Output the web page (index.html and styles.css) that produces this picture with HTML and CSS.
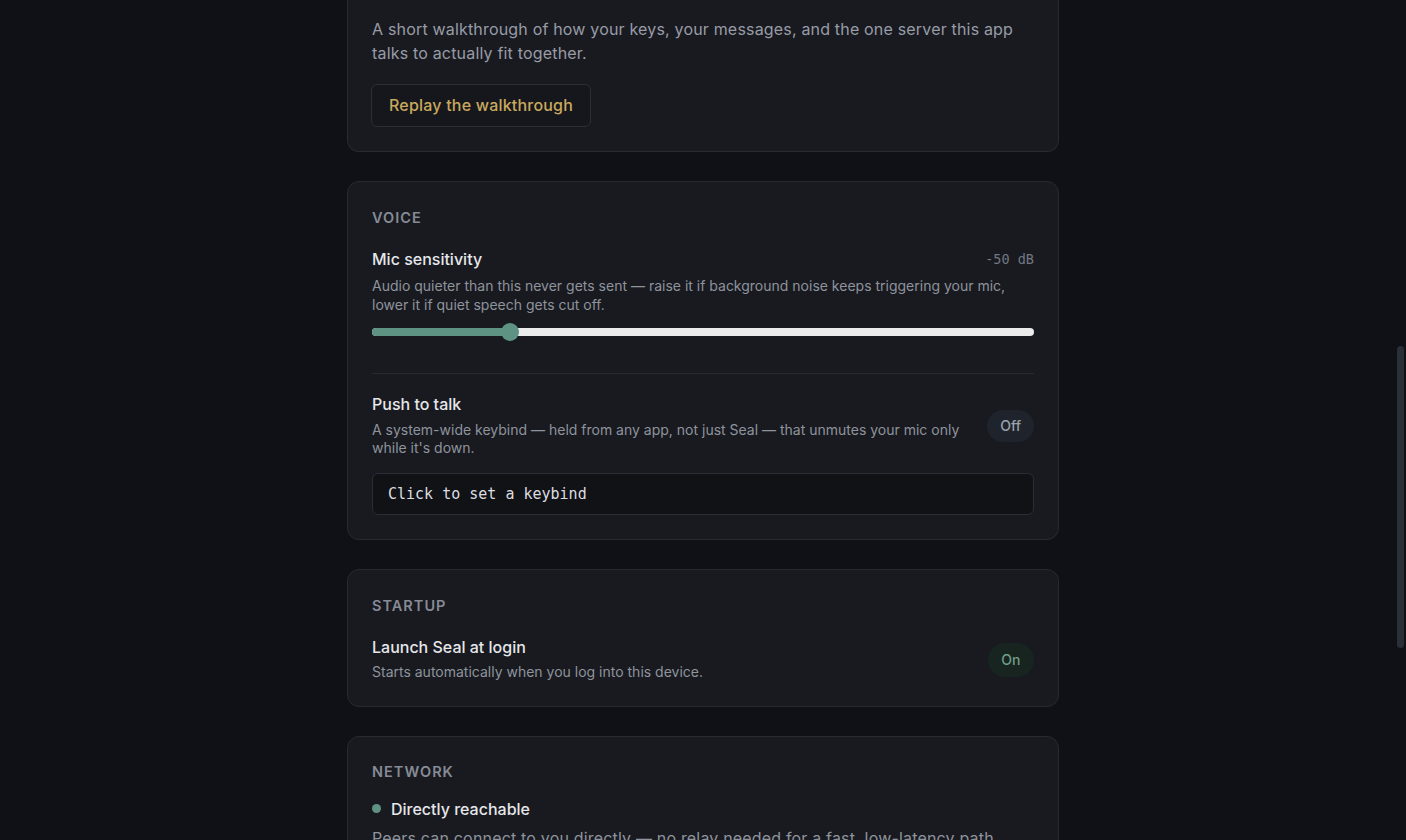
FILE: index.html
```html
<!DOCTYPE html>
<html lang="en">
<head>
<meta charset="utf-8">
<title>Settings</title>
<link rel="stylesheet" href="styles.css">
</head>
<body>
<div class="page">
  <main class="column">
    <section class="card card-cut">
      <p class="lead">A short walkthrough of how your keys, your messages, and the one server this app talks to actually fit together.</p>
      <button class="btn-ghost" type="button">Replay the walkthrough</button>
    </section>

    <section class="card">
      <h2 class="card-title">Voice</h2>
      <div class="setting">
        <div class="setting-head">
          <span class="setting-name">Mic sensitivity</span>
          <span class="setting-value">-50 dB</span>
        </div>
        <p class="setting-desc">Audio quieter than this never gets sent — raise it if background noise keeps triggering your mic, lower it if quiet speech gets cut off.</p>
        <div class="slider">
          <div class="slider-track">
            <div class="slider-fill" style="width: 20.85%"></div>
          </div>
          <div class="slider-thumb" style="left: calc(20.85% - 9px)"></div>
        </div>
      </div>
      <div class="setting setting-sep">
        <div class="setting-row">
          <div class="setting-text">
            <span class="setting-name">Push to talk</span>
            <p class="setting-desc">A system-wide keybind — held from any app, not just Seal — that unmutes your mic only while it's down.</p>
          </div>
          <button class="pill pill-off" type="button">Off</button>
        </div>
        <button class="keybind" type="button">Click to set a keybind</button>
      </div>
    </section>

    <section class="card">
      <h2 class="card-title">Startup</h2>
      <div class="setting">
        <div class="setting-row">
          <div class="setting-text setting-text-compact">
            <span class="setting-name">Launch Seal at login</span>
            <p class="setting-desc">Starts automatically when you log into this device.</p>
          </div>
          <button class="pill pill-on" type="button">On</button>
        </div>
      </div>
    </section>

    <section class="card">
      <h2 class="card-title card-title-tight">Network</h2>
      <div class="status">
        <span class="status-dot"></span>
        <span class="setting-name">Directly reachable</span>
      </div>
      <p class="status-desc">Peers can connect to you directly — no relay needed for a fast, low-latency path.</p>
    </section>
  </main>
  <div class="scrollbar"><div class="scrollbar-thumb"></div></div>
</div>
</body>
</html>
```

FILE: styles.css
```css
* { box-sizing: border-box; }

html, body {
  margin: 0;
  padding: 0;
  height: 100%;
}

body {
  background: #0f1116;
  color: #e4e5e8;
  font-family: Inter, "Noto Sans", "Liberation Sans", sans-serif;
  overflow: hidden;
}

.page {
  position: relative;
  height: 840px;
  overflow: hidden;
}

.column {
  width: 712px;
  margin: 0 auto;
  display: flex;
  flex-direction: column;
  gap: 29px;
}

.card {
  background: #181a20;
  border: 1px solid #272a32;
  border-radius: 12px;
  padding: 24px;
}

.card-cut {
  border-top: none;
  border-radius: 0 0 12px 12px;
  padding-top: 17px;
}

.lead {
  margin: 0 0 19px;
  font-size: 16px;
  line-height: 24px;
  letter-spacing: 0.18px;
  color: #989ca6;
}

.btn-ghost {
  margin-left: -1px;
  font-family: inherit;
  font-size: 16px;
  font-weight: 500;
  line-height: 21px;
  letter-spacing: 0.2px;
  color: #c9a95e;
  background: #15171c;
  border: 1px solid #2b2f37;
  border-radius: 6px;
  padding: 10px 17px;
  cursor: pointer;
}

.card-title {
  margin: 2px 0 21px;
  font-size: 14.5px;
  line-height: 20px;
  font-weight: 600;
  letter-spacing: 0.07em;
  text-transform: uppercase;
  color: #868b95;
}

.card-title-tight { margin: 1px 0 17px; }

.setting-head {
  display: flex;
  justify-content: space-between;
  align-items: center;
}

.setting-name {
  font-size: 16px;
  line-height: 20px;
  font-weight: 500;
  color: #e6e7ea;
}

.setting-value {
  font-family: "DejaVu Sans Mono", "Liberation Mono", monospace;
  font-size: 13.5px;
  color: #727781;
}

.setting-desc {
  margin: 8px 0 0;
  font-size: 14px;
  line-height: 18.8px;
  color: #8f939c;
}

.slider {
  position: relative;
  height: 20px;
  margin-top: 7px;
  display: flex;
  align-items: center;
}

.slider-track {
  width: 100%;
  height: 8px;
  border-radius: 4px;
  background: #ebebeb;
  overflow: hidden;
}

.slider-fill {
  height: 100%;
  background: #5e9384;
}

.slider-thumb {
  position: absolute;
  top: 1px;
  width: 18px;
  height: 18px;
  border-radius: 50%;
  background: #5e9384;
}

.setting-sep {
  margin-top: 31px;
  padding-top: 20px;
  border-top: 1px solid #272a32;
}

.setting-row {
  display: flex;
  align-items: center;
  justify-content: space-between;
  gap: 24px;
}

.setting-text {
  display: flex;
  flex-direction: column;
  flex: 1;
}

.setting-text .setting-desc { margin-top: 7px; }

.setting-text-compact .setting-desc { margin-top: 6px; }

.pill {
  flex: none;
  font-family: inherit;
  font-size: 14px;
  font-weight: 500;
  height: 32px;
  padding: 0 13px;
  border: none;
  border-radius: 16px;
  cursor: pointer;
}

.pill-off {
  background: #1f242c;
  color: #9ba1ab;
}

.pill-on {
  height: 34px;
  padding: 0 13.5px;
  border-radius: 17px;
  background: #18241f;
  color: #6f9d88;
}

.keybind {
  display: block;
  width: 100%;
  margin-top: 15px;
  height: 42px;
  padding: 0 15px;
  text-align: left;
  font-family: "DejaVu Sans Mono", "Liberation Mono", monospace;
  font-size: 15px;
  color: #dcdde0;
  background: #111216;
  border: 1px solid #292d35;
  border-radius: 6px;
  cursor: pointer;
}

.status {
  display: flex;
  align-items: center;
  gap: 10px;
}

.status-dot {
  width: 9px;
  height: 9px;
  border-radius: 50%;
  background: #5e9384;
}

.status-desc {
  margin: 7px 0 0;
  font-size: 16px;
  line-height: 24px;
  letter-spacing: 0.18px;
  color: #8f939c;
}

.scrollbar {
  position: absolute;
  top: 0;
  right: 0;
  width: 12px;
  height: 840px;
}

.scrollbar-thumb {
  position: absolute;
  top: 346px;
  left: 3px;
  width: 7px;
  height: 302px;
  border-radius: 4px;
  background: #2a2f38;
}
```
